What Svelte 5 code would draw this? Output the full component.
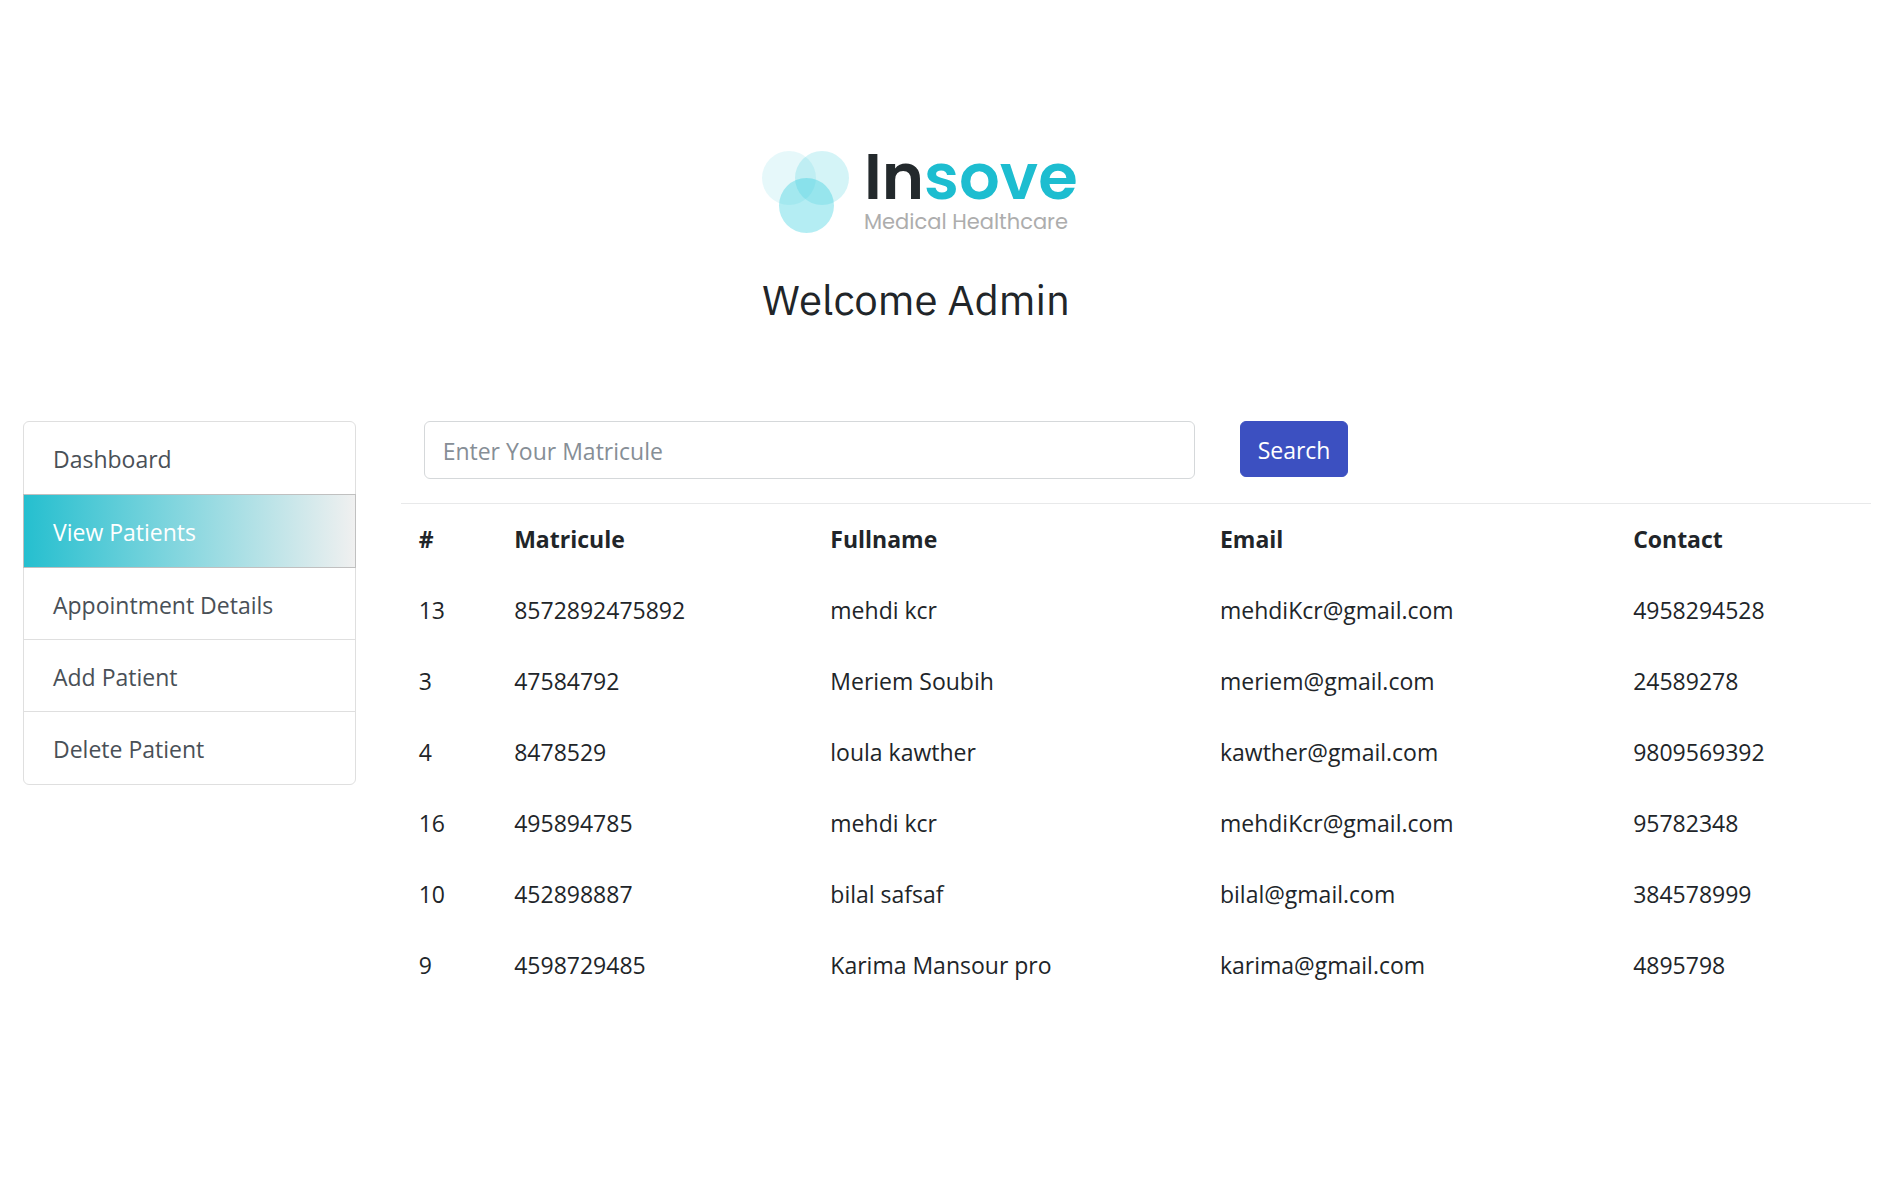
<script>
  const links = ['Dashboard', 'View Patients', 'Appointment Details', 'Add Patient', 'Delete Patient'];
  const active = 'View Patients';
  const columns = ['#', 'Matricule', 'Fullname', 'Email', 'Contact'];
  const patients = [
    ['13', '8572892475892', 'mehdi kcr', 'mehdiKcr@gmail.com', '4958294528'],
    ['3', '47584792', 'Meriem Soubih', 'meriem@gmail.com', '24589278'],
    ['4', '8478529', 'loula kawther', 'kawther@gmail.com', '9809569392'],
    ['16', '495894785', 'mehdi kcr', 'mehdiKcr@gmail.com', '95782348'],
    ['10', '452898887', 'bilal safsaf', 'bilal@gmail.com', '384578999'],
    ['9', '4598729485', 'Karima Mansour pro', 'karima@gmail.com', '4895798']
  ];
  let query = $state('');
</script>

<div class="page">
  <header>
    <svg class="logo" width="340" height="110" viewBox="0 -20 340 110" role="img" aria-label="Insove Medical Healthcare">
      <circle cx="27" cy="28" r="27" fill="#1dbdd0" fill-opacity=".11" />
      <circle cx="60" cy="28" r="27" fill="#1dc3d2" fill-opacity=".19" />
      <circle cx="44.5" cy="55.5" r="27.5" fill="#1bc8dc" fill-opacity=".33" />
      <text class="brand" x="102" y="49"><tspan class="dark">In</tspan>sove</text>
      <text class="tagline" x="102" y="79">Medical Healthcare</text>
    </svg>
    <h1>Welcome Admin</h1>
  </header>

  <div class="content">
    <nav aria-label="Administration">
      {#each links as link}
        <a href="#top" class:active={link === active} aria-current={link === active ? 'page' : undefined}>{link}</a>
      {/each}
    </nav>

    <main>
      <form onsubmit={(e) => e.preventDefault()}>
        <input type="text" aria-label="Matricule" placeholder="Enter Your Matricule" bind:value={query} />
        <button type="submit">Search</button>
      </form>
      <table>
        <colgroup>
          <col class="c-id" /><col class="c-matricule" /><col class="c-name" /><col class="c-email" /><col class="c-contact" />
        </colgroup>
        <thead>
          <tr>{#each columns as column}<th scope="col">{column}</th>{/each}</tr>
        </thead>
        <tbody>
          {#each patients as patient}
            <tr>{#each patient as value}<td>{value}</td>{/each}</tr>
          {/each}
        </tbody>
      </table>
    </main>
  </div>
</div>

<style>
  :global(body) { margin: 0; background: #fff; }
  .page {
    padding: 130px 23px 48px;
    color: #212529;
    font-family: 'Segoe UI', 'Open Sans', 'Noto Sans', sans-serif;
    font-size: 23px;
    line-height: 36px;
  }
  header { margin-left: 40%; }
  .logo { display: block; }
  .brand { font: 600 64px Poppins, Inter, sans-serif; fill: #1dbdd0; }
  .dark { fill: #23292c; }
  .tagline { font: 400 21px Poppins, Inter, sans-serif; fill: #adadad; }
  h1 {
    margin: 35px 0 97px;
    font: 400 42px/49px 'IBM Plex Sans', 'Noto Sans', sans-serif;
  }
  .content {
    display: grid;
    grid-template-columns: 18% minmax(0, 1fr);
    gap: 45px;
    align-items: start;
  }
  nav {
    display: flex;
    flex-direction: column;
    border: 1px solid #dfdfdf;
    border-radius: 6px;
  }
  nav a {
    padding: 19px 29px 16px;
    color: #495057;
    text-decoration: none;
    border-bottom: 1px solid #dfdfdf;
  }
  nav a:first-child, nav a:last-child { border-color: transparent; }
  nav a.active {
    margin: 0 -1px;
    padding-bottom: 17px;
    color: #fff;
    background: linear-gradient(to right, #25bfcf, #f0f0f0);
    border: 1px solid #c0c0c0;
  }
  form { display: flex; align-items: flex-start; gap: 45px; padding: 0 23px; }
  input, button { box-sizing: border-box; font: inherit; border-radius: 6px; }
  input {
    flex: 0 1 771px;
    min-width: 0;
    height: 58px;
    padding: 2px 18px 0;
    color: #495057;
    background: #fff;
    border: 1px solid #d5d8da;
  }
  input::placeholder { color: #868e96; opacity: 1; }
  button {
    height: 56px;
    padding: 2px 17px 0;
    color: #fff;
    background: #3c50c1;
    border: 1px solid #3c50c1;
    cursor: pointer;
  }
  table {
    width: 100%;
    margin-top: 24px;
    table-layout: fixed;
    border-collapse: collapse;
    border-top: 1px solid #e8e9ea;
  }
  th, td { padding: 17px 18px 18px; text-align: left; }
  .c-id { width: 6.5%; }
  .c-matricule { width: 21.5%; }
  .c-name { width: 26.5%; }
  .c-email { width: 28.1%; }
  .c-contact { width: 17.4%; }
</style>
